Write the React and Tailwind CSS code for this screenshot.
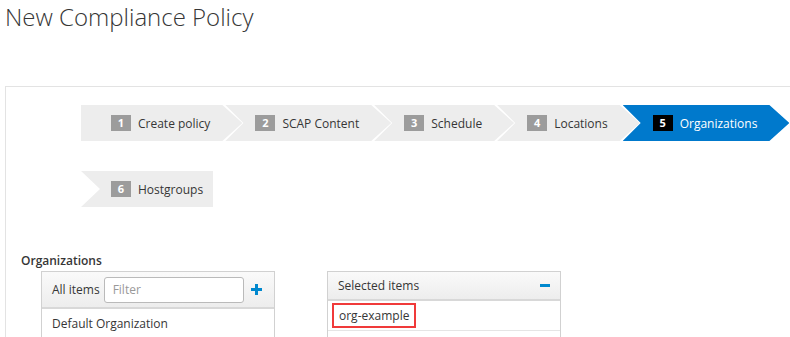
import React from 'react'

const steps = [
    { n: 1, label: 'Create policy' },
    { n: 2, label: 'SCAP Content' },
    { n: 3, label: 'Schedule' },
    { n: 4, label: 'Locations' },
    { n: 5, label: 'Organizations', active: true },
]

function Step({ n, label, active, first, last }) {
    let shape = '[clip-path:polygon(0_0,calc(100%_-_20px)_0,100%_50%,calc(100%_-_20px)_100%,0_100%,18px_50%)]'
    if (first) shape = '[clip-path:polygon(0_0,calc(100%_-_20px)_0,100%_50%,calc(100%_-_20px)_100%,0_100%)]'
    if (last) shape = '[clip-path:polygon(0_0,100%_0,100%_100%,0_100%,19px_50%)]'

    return (
        <div
            className={`shrink-0 whitespace-nowrap h-[36px] flex items-center gap-[7px] pl-[30px] ${last ? 'pr-[10px]' : 'pr-[32px]'} ${first || last ? '' : 'ml-[-17px]'} ${shape} ${active ? 'bg-[#0079cc] text-white' : 'bg-[#ededed] text-[#363636]'}`}
        >
            <span className={`w-[20px] h-[16px] flex items-center justify-center text-[11px] font-bold text-white ${active ? 'bg-black' : 'bg-[#9c9c9c]'}`}>
                {n}
            </span>
            <span className="text-[12px] leading-none pt-[1px]">{label}</span>
        </div>
    )
}

export default function App() {
    return (
        <div className="w-[790px] h-[337px] overflow-hidden bg-white font-['Open_Sans',sans-serif] text-[#363636]">
            <h1 className="ml-[5px] text-[24px] leading-[33px] font-light text-[#363636]">New Compliance Policy</h1>

            <div className="ml-[5px] mt-[53px] w-[800px] border-l border-t border-[#e3e3e3] pt-[18px] pl-[15px] h-[300px]">
                {/* wizard steps */}
                <div className="pl-[60px]">
                    <div className="flex">
                        {steps.map((s, i) => (
                            <Step key={s.n} {...s} first={i === 0} />
                        ))}
                    </div>
                    <div className="flex mt-[30px]">
                        <Step n={6} label="Hostgroups" last />
                    </div>
                </div>

                <div className="mt-[45px] text-[12px] leading-[18px] font-semibold text-[#363636]">Organizations</div>

                {/* dual list */}
                <div className="flex gap-[52px] mt-[1px] pl-[20px]">
                    <div className="w-[234px] border border-[#d1d1d1]">
                        <div className="h-[37px] flex items-center pl-[10px] pr-[12px] bg-gradient-to-b from-[#fafafa] to-[#ededed] border-b-2 border-[#d8d8d8]">
                            <span className="text-[12px] text-[#363636] mr-[4px]">All items</span>
                            <div className="w-[140px] h-[26px] border border-[#bababa] rounded-[3px] bg-white flex items-center px-[8px] text-[12px] text-[#999]">
                                Filter
                            </div>
                            <svg className="ml-auto" width="11" height="11" viewBox="0 0 11 11">
                                <rect x="4" y="0" width="3" height="11" fill="#0088ce" />
                                <rect x="0" y="4" width="11" height="3" fill="#0088ce" />
                            </svg>
                        </div>
                        <div className="h-[30px] flex items-center pl-[10px] text-[12px] text-[#363636] bg-white">
                            Default Organization
                        </div>
                    </div>

                    <div className="w-[234px] border border-[#d1d1d1]">
                        <div className="h-[29px] flex items-center pl-[10px] pr-[10px] bg-gradient-to-b from-[#fafafa] to-[#ededed] border-b-2 border-[#d8d8d8]">
                            <span className="text-[12px] text-[#363636]">Selected items</span>
                            <span className="ml-auto w-[10px] h-[3px] bg-[#0088ce]" />
                        </div>
                        <div className="h-[30px] flex items-center pl-[4px] border-b border-[#e5e5e5] bg-white">
                            <span className="border-2 border-[#f03a3a] h-[25px] flex items-center px-[5px] text-[12px] text-[#363636]">
                                org-example
                            </span>
                        </div>
                    </div>
                </div>
            </div>
        </div>
    )
}
